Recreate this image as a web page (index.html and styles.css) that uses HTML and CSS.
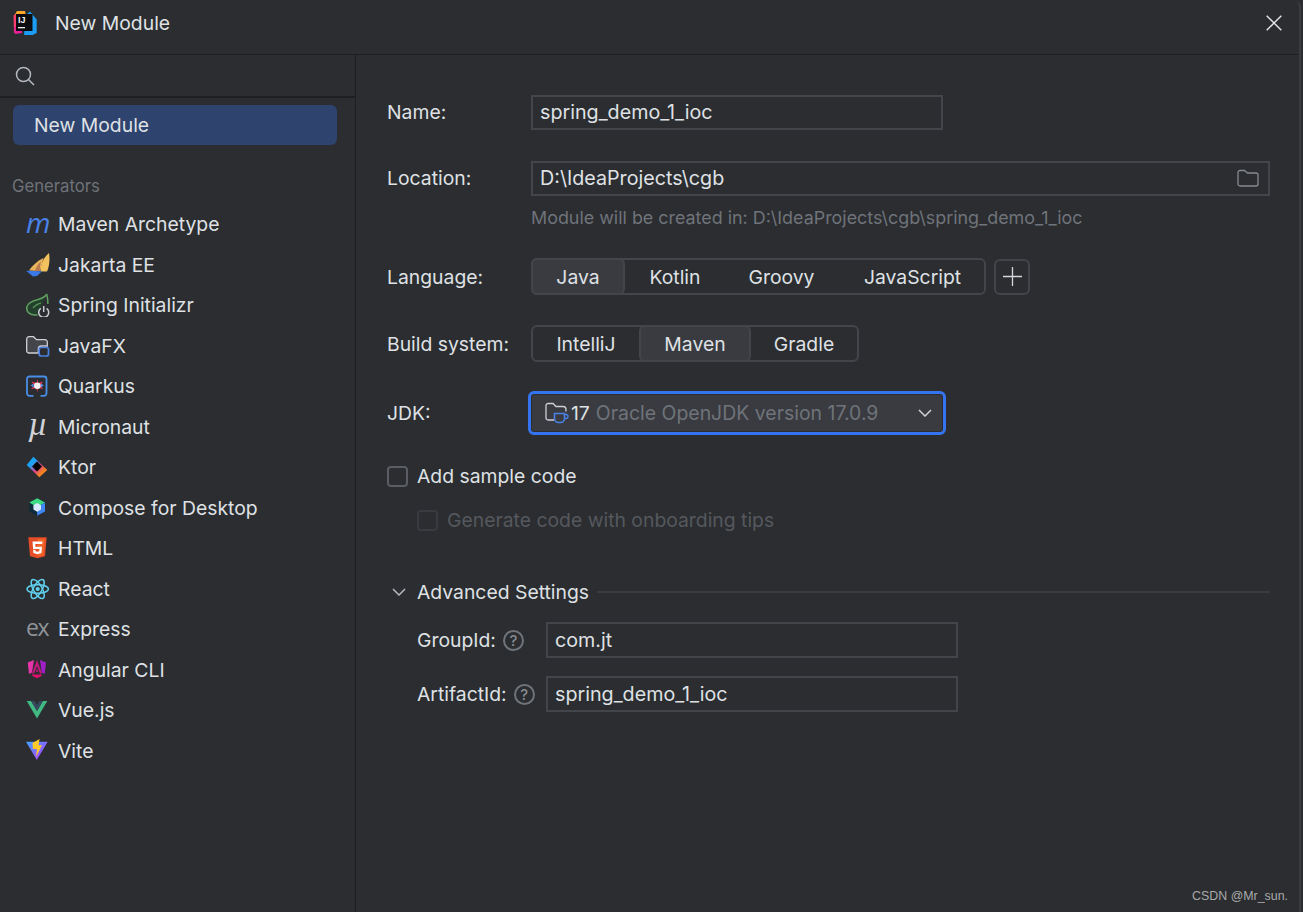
FILE: index.html
```html
<!DOCTYPE html>
<html lang="en">
<head>
<meta charset="utf-8">
<title>New Module</title>
<link rel="stylesheet" href="styles.css">
</head>
<body>
<div class="window">
  <header class="titlebar">
    <svg class="app-logo" width="26" height="26" viewBox="0 0 26 26">
      <path d="M5 1h8l1 5H2z" fill="#f9a72b"/>
      <path d="M1.500 5L7 4v16L2 23z" fill="#fc3f6e"/>
      <path d="M18 1.500l6.700 8v13.500l-4 2H12l2-20z" fill="#1c9cf2"/>
      <path d="M2 17l8 1v5l-7 1z" fill="#e81f9d"/>
      <rect x="4" y="4" width="16.500" height="17" fill="#0c0c10"/>
      <text x="6" y="12.600" class="logo-letters">IJ</text>
      <rect x="6" y="17" width="7" height="1.300" fill="#eee"/>
    </svg>
    <span class="title">New Module</span>
    <svg class="close" width="16" height="16" viewBox="0 0 16 16"><path d="M.7.7l14.600 14.600M15.300.7L.7 15.300" stroke="#e6e7ea" stroke-width="1.400" fill="none"/></svg>
  </header>
  <div class="body">
    <aside class="sidebar">
      <div class="search">
        <svg width="20" height="20" viewBox="0 0 20 20" fill="none" stroke="#b4b8bf" stroke-width="1.500"><circle cx="8.500" cy="8.500" r="7"/><path d="M13.500 13.500L19 19"/></svg>
      </div>
      <div class="selected">New Module</div>
      <div class="group">Generators</div>
      <ul class="generators">
        <li><span class="ico glyph maven-m">m</span>Maven Archetype</li>
        <li><span class="ico"><svg width="24" height="24" viewBox="0 0 24 24"><path d="M17.500 5C11 8 6 13 3 17.500l11 .5z" fill="#e9b35c"/><path d="M15 8.500c-3 2.500-5 5.500-6 9.500h5c-.2-3.500 0-6.500 1-9.500z" fill="#b97a50"/><path d="M23 0c-5 4-8.500 11-8.500 18.500h6.500C23.500 13 24 6 23 0z" fill="#f2c25e"/><path d="M0 17.700l16 .6-5 4.700-4 .6z" fill="#3b78e7"/></svg></span>Jakarta EE</li>
        <li><span class="ico"><svg width="24" height="24" viewBox="0 0 24 24" fill="none"><path d="M20.700 1c-1 3-4 4-8.500 5.500C6 8 .7 11 .7 15.300c0 4 3.500 6.700 8.300 6.700h2.500" fill="#23402c" stroke="#5f9e5f" stroke-width="1.600"/><path d="M20.700 1c.8 3 1.200 6 1.200 10" stroke="#5f9e5f" stroke-width="1.500"/><path d="M7 15c2-3 5-4 8-5" stroke="#5f9e5f" stroke-width="1.200"/><path d="M14.800 15.300a5 5 0 1 0 5.800 0" stroke="#c9ccd2" stroke-width="1.500"/><path d="M17.700 13v6" stroke="#c9ccd2" stroke-width="1.500"/></svg></span>Spring Initializr</li>
        <li><span class="ico"><svg width="24" height="24" viewBox="0 0 24 24" fill="none"><path d="M.7 5a2.300 2.300 0 0 1 2.300-2.300h4.500l3 3h8.500a2.300 2.300 0 0 1 2.300 2.300v4h-6a3 3 0 0 0-3 3V19H3a2.300 2.300 0 0 1-2.300-2.300z" fill="#43454a" stroke="#ced0d6" stroke-width="1.300"/><rect x="13.200" y="13.500" width="9.300" height="8.500" rx="2" fill="#2b2d30" stroke="#4a7fe0" stroke-width="1.700"/></svg></span>JavaFX</li>
        <li><span class="ico"><svg width="24" height="24" viewBox="0 0 24 24" fill="none"><path d="M7.500 21.800H3.500a2.500 2.500 0 0 1-2.500-2.500V5a2.500 2.500 0 0 1 2.500-2.500h14.500a2.500 2.500 0 0 1 2.500 2.500v14.300a2.500 2.500 0 0 1-2.500 2.500H14.500" stroke="#4a8fe7" stroke-width="1.800"/><path d="M5.500 7.500l5 1.500L11.300 5l1 4 4.700-1.500-2.500 4 2.500 3.500-4.700-1-.9 4-1.200-4-5.200 1 3-3.500z" fill="#e8304f"/><path d="M4.500 11.500l3-2 .5 4zM18 11.500l-3-2-.5 4z" fill="#4a8fe7"/><circle cx="11.300" cy="11.700" r="3.300" fill="#f1f1f1"/></svg></span>Quarkus</li>
        <li><span class="ico glyph micronaut">µ</span>Micronaut</li>
        <li><span class="ico"><svg width="24" height="24" viewBox="0 0 24 24"><defs><linearGradient id="ktor" x1="0" y1="0" x2="1" y2="1"><stop offset=".3" stop-color="#1aa3f5"/><stop offset=".55" stop-color="#d8408a"/><stop offset=".75" stop-color="#f58220"/></linearGradient></defs><path d="M7.300 1.700l14 13.300-8 7.300L.7 10z" fill="url(#ktor)"/><rect x="7.500" y="8" width="7" height="7" fill="#050505" transform="rotate(45 11 11.500)"/></svg></span>Ktor</li>
        <li><span class="ico"><svg width="24" height="24" viewBox="0 0 24 24"><path d="M11.200 2.300L19 6.500v9l-7.800 4.300L3.300 15.500v-9z" fill="#0d2b3a"/><path d="M11.200 2.300L19 6.500l-7.800 4.500-7.900-4.500z" fill="#3ddc84"/><path d="M11.200 11L19 6.500v9l-7.800 4.300z" fill="#4285f4"/><path d="M11.200 7l3.800 2.200v4.300l-3.800 2.200-3.800-2.200V9.200z" fill="#d9e8ff"/></svg></span>Compose for Desktop</li>
        <li><span class="ico"><svg width="24" height="24" viewBox="0 0 24 24"><path d="M2.300 1.300h18.400l-1.700 19L11.500 22.300 4 20.300z" fill="#e44d26"/><path d="M11.500 3h7.400l-1.400 16-6 1.700z" fill="#f16529"/><path d="M6.500 5.500h10l-.3 2.500H9.300l.2 2.700h6.500l-.6 6.300-4 1.200-4-1.200-.3-3.200h2.400l.1 1.500 1.800.5 1.900-.5.200-2.200H7.100z" fill="#fff"/></svg></span>HTML</li>
        <li><span class="ico"><svg width="24" height="24" viewBox="0 0 24 24" fill="none" stroke="#5fd0ee" stroke-width="1.500"><ellipse cx="11.700" cy="12" rx="10.700" ry="4.300"/><ellipse cx="11.700" cy="12" rx="10.700" ry="4.300" transform="rotate(60 11.700 12)"/><ellipse cx="11.700" cy="12" rx="10.700" ry="4.300" transform="rotate(120 11.700 12)"/><circle cx="11.700" cy="12" r="2.100" fill="#5fd0ee" stroke="none"/></svg></span>React</li>
        <li><span class="ico glyph express">ex</span>Express</li>
        <li><span class="ico"><svg width="24" height="24" viewBox="0 0 24 24"><path d="M8 2L1.700 4.500 3 16l3-1.500z" fill="#e535ab"/><path d="M14 2l6 2.500L18.700 16l-3-1.500z" fill="#a020c8"/><path d="M11 2l5 13.500-2 0-3-7.500-3 7.500-2 0z" fill="#c9177e"/><path d="M6.500 16.500h9l.5 1.300-5 2.500-5-2.500z" fill="#e0106e"/><path d="M11 10.500l1.300 3.300H9.700z" fill="#c9177e"/></svg></span>Angular CLI</li>
        <li><span class="ico"><svg width="24" height="24" viewBox="0 0 24 24"><path d="M.7 3h4.500L11 13l5.800-10h4.500L11 20.500z" fill="#42b883"/><path d="M5 3h3.700L11 7l2.300-4H17L11 13z" fill="#35495e"/></svg></span>Vue.js</li>
        <li><span class="ico"><svg width="24" height="24" viewBox="0 0 24 24"><defs><linearGradient id="vite" x1="0" y1="0" x2="1" y2="1"><stop offset="0" stop-color="#41a5ff"/><stop offset="1" stop-color="#bd34fe"/></linearGradient></defs><path d="M0 2.800l21.700 0L10.800 21z" fill="url(#vite)"/><path d="M6.500 4l7-4-1 6.500 3.500-.5-6 12 1-8H7z" fill="#ffca28"/></svg></span>Vite</li>
      </ul>
    </aside>
    <main class="form">
      <div class="row row-text">
        <label class="label">Name:</label>
        <div class="field field-short">spring_demo_1_ioc</div>
      </div>
      <div class="row row-text row-location">
        <label class="label">Location:</label>
        <div class="field field-wide">D:\IdeaProjects\cgb
          <svg class="folder" width="22" height="18" viewBox="0 0 22 18" fill="none" stroke="#868a91" stroke-width="1.300"><path d="M1 3.500A2 2 0 0 1 3 1.500h4.500l3 2.500H19a2 2 0 0 1 2 2V15a2 2 0 0 1-2 2H3a2 2 0 0 1-2-2z"/></svg>
        </div>
      </div>
      <p class="hint">Module will be created in: D:\IdeaProjects\cgb\spring_demo_1_ioc</p>
      <div class="row row-language">
        <label class="label">Language:</label>
        <div class="segmented">
          <span class="seg seg-java active">Java</span>
          <span class="seg seg-kotlin">Kotlin</span>
          <span class="seg seg-groovy">Groovy</span>
          <span class="seg seg-js">JavaScript</span>
        </div>
        <button class="plus"><svg width="19" height="19" viewBox="0 0 19 19"><path d="M9.500 0v19M0 9.500h19" stroke="#d5d7dc" stroke-width="1.300"/></svg></button>
      </div>
      <div class="row row-build">
        <label class="label">Build system:</label>
        <div class="segmented">
          <span class="seg seg-intellij">IntelliJ</span>
          <span class="seg seg-maven active">Maven</span>
          <span class="seg seg-gradle">Gradle</span>
        </div>
      </div>
      <div class="row row-jdk">
        <label class="label">JDK:</label>
        <div class="combo">
          <svg class="jdk-ico" width="24" height="24" viewBox="0 0 24 24" fill="none"><path d="M9 19H3a2 2 0 0 1-2-2V4.500a2 2 0 0 1 2-2h5l3 3h7a3 3 0 0 1 3 3v2" stroke="#ced0d6" stroke-width="1.300"/><path d="M9.500 12.500h10v5a4 4 0 0 1-4 4h-2a4 4 0 0 1-4-4z" stroke="#4a82e8" stroke-width="1.600"/><path d="M19.500 13.500h1.500a1.500 1.500 0 0 1 0 4h-1.500" stroke="#4a82e8" stroke-width="1.300"/></svg>
          <span class="jdk-ver">17</span><span class="jdk-name">Oracle OpenJDK version 17.0.9</span>
          <svg class="chevron" width="14" height="8" viewBox="0 0 14 8" fill="none" stroke="#d0d2d7" stroke-width="1.500"><path d="M1 1l6 6 6-6"/></svg>
        </div>
      </div>
      <div class="check check-sample"><span class="box"></span>Add sample code</div>
      <div class="check check-tips"><span class="box"></span>Generate code with onboarding tips</div>
      <div class="advanced">
        <svg width="14" height="8" viewBox="0 0 14 8" fill="none" stroke="#b4b8bf" stroke-width="1.500"><path d="M1 1l6 6 6-6"/></svg>
        <span>Advanced Settings</span>
        <i class="rule"></i>
      </div>
      <div class="row row-group">
        <label class="sublabel">GroupId:<span class="help">?</span></label>
        <div class="field field-sub">com.jt</div>
      </div>
      <div class="row row-artifact">
        <label class="sublabel">ArtifactId:<span class="help">?</span></label>
        <div class="field field-sub">spring_demo_1_ioc</div>
      </div>
    </main>
  </div>
  <div class="watermark">CSDN @Mr_sun.</div>
</div>
</body>
</html>
```
FILE: styles.css
```css
* { box-sizing: border-box; }
html, body { margin: 0; padding: 0; background: #2b2d30; }
body { width: 1303px; height: 912px; overflow: hidden; font-family: Inter, "Noto Sans", sans-serif; font-size: 19.350px; color: #dfe1e5; }
.window { position: relative; width: 1301px; height: 912px; background: #2b2d30; border-right: 2px solid #3a3c40; border-top-right-radius: 8px; }
.titlebar { display: flex; align-items: center; height: 55px; padding: 0 17px 8px 12px; border-bottom: 1px solid #1e1f22; }
.app-logo { flex: none; }
.title { margin-left: 17px; flex: 1; }
.close { flex: none; }
.body { display: flex; height: 857px; }
.sidebar { width: 356px; flex: none; border-right: 1px solid #1e1f22; }
.search { display: flex; align-items: center; height: 43px; padding-left: 15px; border-bottom: 2px solid #1e1f22; }
.selected { display: flex; align-items: center; height: 40px; margin: 7px 18px 0 13px; padding-left: 21px; background: #2e436e; border-radius: 6px; }
.group { margin: 31px 0 0 12px; height: 20px; line-height: 20px; font-size: 16.700px; color: #6f737a; }
.generators { list-style: none; margin: 8px 0 0; padding: 0 0 0 26px; }
.generators li { display: flex; align-items: center; height: 40.500px; }
.ico { display: flex; flex: none; width: 24px; height: 24px; margin-right: 8px; }
.glyph { align-items: center; }
.maven-m { font-family: "Open Sans", sans-serif; font-style: italic; font-size: 28px; font-weight: 500; color: #4a82e8; line-height: 24px; padding-bottom: 5px; }
.micronaut { font-family: "Liberation Serif", serif; font-style: italic; font-size: 34px; color: #d0d2d7; line-height: 24px; padding: 0 0 5px 2px; }
.express { font-family: "Open Sans", sans-serif; font-size: 23px; color: #8f9399; letter-spacing: -1.500px; line-height: 24px; padding-bottom: 5px; }
.logo-letters { font-family: "Liberation Sans", sans-serif; font-size: 9px; font-weight: 700; fill: #f3f3f3; }
.form { flex: 1; min-width: 0; padding: 40px 0 0 31px; }
.row { display: flex; align-items: center; }
.label { width: 144px; flex: none; }
.row-text .label { padding-bottom: 2px; }
.row-text .field { padding-bottom: 1px; }
.field { display: flex; align-items: center; justify-content: space-between; height: 35px; padding: 0 9px 0 7px; border: 2px solid #43454a; font-size: 19.700px; }
.field-short { width: 412px; }
.field-wide { width: 739px; }
.field-sub { width: 412px; height: 36px; }
.folder { flex: none; }
.row-location { margin-top: 31px; }
.hint { margin: 10px 0 0 144px; height: 24px; line-height: 24px; font-size: 17.900px; color: #6f737a; }
.row-language { margin-top: 28px; }
.segmented { display: flex; height: 37px; border: 2px solid #43454a; border-radius: 6px; }
.seg { display: flex; align-items: center; justify-content: center; height: 33px; }
.seg.active { margin: -2px 0; height: 37px; background: #393b40; border: 2px solid #43454a; border-radius: 6px; }
.seg-java { width: 94px; margin-left: -2px !important; }
.seg-kotlin { width: 100px; }
.seg-groovy { width: 113px; }
.seg-js { width: 146px; padding-left: 3px; }
.seg-intellij { width: 106px; }
.seg-maven { width: 112px; }
.seg-gradle { width: 106px; }
.plus { display: flex; align-items: center; justify-content: center; width: 36px; height: 36px; margin-left: 8px; padding: 0; background: none; border: 2px solid #43454a; border-radius: 6px; }
.row-build { margin-top: 30px; }
.row-jdk { margin-top: 29px; }
.row-jdk .label { width: 141px; }
.combo { display: flex; align-items: center; width: 418px; height: 44px; padding: 0 11px 0 14px; background: #393b40; border: 3px solid #3574f0; border-radius: 6px; box-shadow: inset 0 0 0 1px #2b2d30; }
.jdk-ico { flex: none; margin-right: 2px; }
.jdk-ver { margin-right: 6px; }
.jdk-name { flex: 1; color: #6f737a; font-size: 19.450px; }
.chevron { flex: none; }
.check { display: flex; align-items: center; height: 22px; }
.box { width: 21px; height: 21px; margin-right: 9px; border: 2px solid #5a5d63; border-radius: 4px; }
.check-sample { margin-top: 30px; }
.check-tips { margin: 22px 0 0 30px; color: #55585e; }
.check-tips .box { border-color: #393b40; }
.advanced { display: flex; align-items: center; margin-top: 49px; height: 24px; }
.advanced svg { flex: none; margin: 0 11px 0 5px; }
.rule { flex: 1; height: 2px; margin: 0 29px 0 8px; background: #393b40; }
.sublabel { display: flex; align-items: center; width: 129px; margin-left: 30px; flex: none; }
.help { display: flex; align-items: center; justify-content: center; width: 21px; height: 21px; margin-left: 7px; border: 2px solid #6f737a; border-radius: 50%; font-size: 15px; font-weight: 500; color: #868a91; }
.row-group { margin-top: 18px; }
.row-artifact { margin-top: 18px; }
.watermark { position: absolute; right: 11px; bottom: 9px; font-family: "Liberation Sans", Arial, sans-serif; font-size: 12.400px; color: #a8a9ab; }
```
